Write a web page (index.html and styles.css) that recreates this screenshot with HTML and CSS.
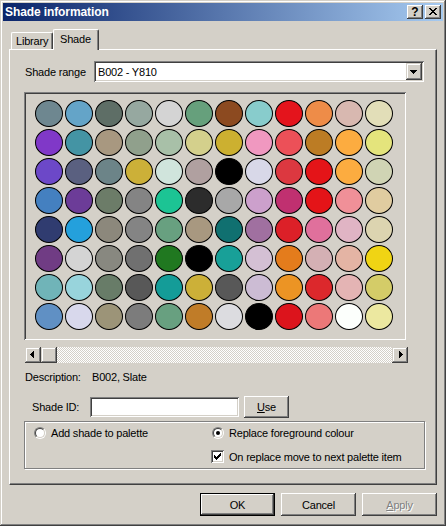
FILE: index.html
```html
<!DOCTYPE html>
<html>
<head>
<meta charset="utf-8">
<link rel="stylesheet" href="styles.css">
</head>
<body>
<div class="window">
  <div class="titlebar">
    <span class="title">Shade information</span>
    <div class="tbtns">
      <span class="tbtn help">?</span>
      <span class="tbtn close"><svg width="16" height="14" viewBox="0 0 16 14" shape-rendering="crispEdges"><path d="M4 3h2v1h-2zM10 3h2v1h-2zM5 4h2v1h-2zM9 4h2v1h-2zM6 5h4v1h-4zM7 6h2v1h-2zM6 7h4v1h-4zM5 8h2v1h-2zM9 8h2v1h-2zM4 9h2v1h-2zM10 9h2v1h-2z" fill="#000"/></svg></span>
    </div>
  </div>
  <div class="content">
    <div class="tabs">
      <div class="tab lib">Library</div>
      <div class="tab active">Shade</div>
    </div>
    <div class="panel">
      <div class="range">
        <span class="lbl-range">Shade range</span>
        <div class="combo">
          <span class="combo-text">B002 - Y810</span>
          <span class="dd"><svg width="16" height="17" viewBox="0 0 16 17" shape-rendering="crispEdges"><path d="M4 7h7v1h-7zM5 8h5v1h-5zM6 9h3v1h-3zM7 10h1v1h-1z" fill="#000"/></svg></span>
        </div>
      </div>
      <div class="swatches">
        <div class="grid">
          <span class="sw" style="background:#6e8790"></span><span class="sw" style="background:#64a4c8"></span><span class="sw" style="background:#5e6e66"></span><span class="sw" style="background:#96a8a0"></span><span class="sw" style="background:#d4d4d4"></span><span class="sw" style="background:#66a07c"></span><span class="sw" style="background:#8c4a20"></span><span class="sw" style="background:#88cccc"></span><span class="sw" style="background:#e4141c"></span><span class="sw" style="background:#ee8c48"></span><span class="sw" style="background:#d8b8b0"></span><span class="sw" style="background:#e2deb8"></span>
          <span class="sw" style="background:#8038c8"></span><span class="sw" style="background:#4494a4"></span><span class="sw" style="background:#a89880"></span><span class="sw" style="background:#90a08c"></span><span class="sw" style="background:#a8c0a8"></span><span class="sw" style="background:#d4d08c"></span><span class="sw" style="background:#ccb030"></span><span class="sw" style="background:#f098c0"></span><span class="sw" style="background:#ec5058"></span><span class="sw" style="background:#bc7c24"></span><span class="sw" style="background:#fcac40"></span><span class="sw" style="background:#e4e47c"></span>
          <span class="sw" style="background:#6c48c8"></span><span class="sw" style="background:#5a6080"></span><span class="sw" style="background:#6c8488"></span><span class="sw" style="background:#ccb038"></span><span class="sw" style="background:#d0e4dc"></span><span class="sw" style="background:#b0a0a0"></span><span class="sw" style="background:#000000"></span><span class="sw" style="background:#d8d8e8"></span><span class="sw" style="background:#dc3840"></span><span class="sw" style="background:#e41418"></span><span class="sw" style="background:#fcac40"></span><span class="sw" style="background:#d0d4b4"></span>
          <span class="sw" style="background:#4480c0"></span><span class="sw" style="background:#6c3c98"></span><span class="sw" style="background:#6c7c68"></span><span class="sw" style="background:#848484"></span><span class="sw" style="background:#1cc494"></span><span class="sw" style="background:#2c2c2c"></span><span class="sw" style="background:#a8a8a8"></span><span class="sw" style="background:#cca0cc"></span><span class="sw" style="background:#c03070"></span><span class="sw" style="background:#e41418"></span><span class="sw" style="background:#f09098"></span><span class="sw" style="background:#e0cca0"></span>
          <span class="sw" style="background:#303c70"></span><span class="sw" style="background:#24a0dc"></span><span class="sw" style="background:#8c887c"></span><span class="sw" style="background:#848484"></span><span class="sw" style="background:#68a080"></span><span class="sw" style="background:#a89880"></span><span class="sw" style="background:#107070"></span><span class="sw" style="background:#a070a0"></span><span class="sw" style="background:#dc2028"></span><span class="sw" style="background:#e0709c"></span><span class="sw" style="background:#e0b4c4"></span><span class="sw" style="background:#dcd4b0"></span>
          <span class="sw" style="background:#703c84"></span><span class="sw" style="background:#d4d4d4"></span><span class="sw" style="background:#888880"></span><span class="sw" style="background:#707070"></span><span class="sw" style="background:#207820"></span><span class="sw" style="background:#000000"></span><span class="sw" style="background:#18a098"></span><span class="sw" style="background:#d4c0d4"></span><span class="sw" style="background:#e47c1c"></span><span class="sw" style="background:#d4b0b4"></span><span class="sw" style="background:#e4b4a4"></span><span class="sw" style="background:#f0d414"></span>
          <span class="sw" style="background:#70b4b8"></span><span class="sw" style="background:#98d4dc"></span><span class="sw" style="background:#687c68"></span><span class="sw" style="background:#585858"></span><span class="sw" style="background:#149c98"></span><span class="sw" style="background:#ccb038"></span><span class="sw" style="background:#585858"></span><span class="sw" style="background:#ccbcd4"></span><span class="sw" style="background:#ec9424"></span><span class="sw" style="background:#dc282c"></span><span class="sw" style="background:#e4b4b4"></span><span class="sw" style="background:#d4cc68"></span>
          <span class="sw" style="background:#6090c4"></span><span class="sw" style="background:#d8d8ec"></span><span class="sw" style="background:#9c9478"></span><span class="sw" style="background:#7c7c7c"></span><span class="sw" style="background:#68a080"></span><span class="sw" style="background:#c07c28"></span><span class="sw" style="background:#dcdce0"></span><span class="sw" style="background:#000000"></span><span class="sw" style="background:#dc141c"></span><span class="sw" style="background:#ec7878"></span><span class="sw" style="background:#fcfffc"></span><span class="sw" style="background:#ece8a0"></span>
        </div>
      </div>
      <div class="hscroll">
        <span class="sbtn"><svg width="16" height="16" viewBox="0 0 16 16" shape-rendering="crispEdges"><path d="M5 7h1v1h-1zM6 6h1v3h-1zM7 5h1v5h-1zM8 4h1v7h-1z" fill="#000"/></svg></span>
        <span class="thumb"></span>
        <span class="track"></span>
        <span class="sbtn"><svg width="16" height="16" viewBox="0 0 16 16" shape-rendering="crispEdges"><path d="M7 4h1v7h-1zM8 5h1v5h-1zM9 6h1v3h-1zM10 7h1v1h-1z" fill="#000"/></svg></span>
      </div>
      <div class="desc">
        <span class="dlabel">Description:</span>
        <span>B002, Slate</span>
      </div>
      <div class="idrow">
        <span class="idlabel">Shade ID:</span>
        <span class="field"></span>
        <span class="btn use"><span><u>U</u>se</span></span>
      </div>
      <div class="group">
        <div class="opt">
          <span class="cell"><span class="radio"><span class="radio-in"></span></span></span>
          <span class="opt-text">Add shade to palette</span>
        </div>
        <div class="opt">
          <span class="cell"><span class="radio"><span class="radio-in"><span class="dot"></span></span></span></span>
          <span class="opt-text">Replace foreground colour</span>
        </div>
        <div class="opt empty"></div>
        <div class="opt">
          <span class="cell check"><svg width="13" height="13" viewBox="0 0 13 13" shape-rendering="crispEdges"><path d="M9 3h1v1h-1zM8 4h2v1h-2zM3 5h1v1h-1zM7 5h3v1h-3zM3 6h2v1h-2zM6 6h3v1h-3zM3 7h5v1h-5zM4 8h3v1h-3zM5 9h1v1h-1z" fill="#000"/></svg></span>
          <span class="opt-text">On replace move to next palette item</span>
        </div>
      </div>
    </div>
    <div class="actions">
      <span class="btn default">OK</span>
      <span class="btn">Cancel</span>
      <span class="btn disabled"><span><u>A</u>pply</span></span>
    </div>
  </div>
</div>
</body>
</html>
```

FILE: styles.css
```css
html, body {
  margin: 0;
  padding: 0;
  background: #d4d0c8;
}
body {
  font: 11px "Liberation Sans", Arial, sans-serif;
  letter-spacing: -0.2px;
  color: #000;
}
.window {
  width: 446px;
  height: 526px;
  box-sizing: border-box;
  padding: 3px;
  background: #d4d0c8;
  box-shadow: inset -1px -1px #404040, inset 1px 1px #d4d0c8, inset -2px -2px #808080, inset 2px 2px #fff;
  display: flex;
  flex-direction: column;
}
.titlebar {
  height: 18px;
  display: flex;
  align-items: center;
  justify-content: space-between;
  background: linear-gradient(to right, #0a246a, #a6caf0);
  padding: 0 2px;
}
.title {
  color: #fff;
  font-weight: bold;
  font-size: 12px;
  letter-spacing: -0.1px;
}
.tbtns {
  display: flex;
  gap: 2px;
}
.tbtn {
  width: 16px;
  height: 14px;
  box-sizing: border-box;
  background: #d4d0c8;
  box-shadow: inset -1px -1px #404040, inset 1px 1px #fff, inset -2px -2px #808080;
  display: flex;
  align-items: center;
  justify-content: center;
  font-weight: bold;
  font-size: 12px;
  line-height: 14px;
  letter-spacing: 0;
}
.tbtn svg { display: block; }
.content {
  flex: 1;
  padding: 8px 6px 0 6px;
  display: flex;
  flex-direction: column;
}
.tabs {
  display: flex;
  align-items: flex-end;
  height: 20px;
  padding-left: 2px;
  position: relative;
  z-index: 1;
}
.tab {
  height: 17px;
  box-sizing: border-box;
  border-top: 1px solid #fff;
  border-left: 1px solid #fff;
  border-right: 1px solid #404040;
  box-shadow: inset -1px 0 #808080;
  border-top-left-radius: 2px;
  border-top-right-radius: 2px;
  display: flex;
  align-items: center;
  background: #d4d0c8;
}
.tab.lib {
  width: 42px;
  padding-left: 4px;
}
.tab.active {
  width: 46px;
  height: 21px;
  margin-bottom: -1px;
  padding-left: 6px;
  padding-bottom: 2px;
}
.panel {
  width: 428px;
  height: 436px;
  box-sizing: border-box;
  border: 1px solid;
  border-color: #fff #404040 #404040 #fff;
  box-shadow: inset -1px -1px #808080;
  padding: 11px 0 0 14px;
}
.range {
  display: flex;
  align-items: center;
  height: 21px;
}
.lbl-range {
  width: 70px;
  padding-left: 1px;
  box-sizing: border-box;
}
.combo {
  width: 330px;
  height: 21px;
  box-sizing: border-box;
  padding: 2px;
  background: #fff;
  box-shadow: inset 1px 1px #808080, inset -1px -1px #fff, inset 2px 2px #404040, inset -2px -2px #d4d0c8;
  display: flex;
  align-items: center;
}
.combo-text {
  padding-left: 2px;
}
.dd {
  margin-left: auto;
  width: 16px;
  height: 17px;
  background: #d4d0c8;
  box-shadow: inset -1px -1px #404040, inset 1px 1px #d4d0c8, inset -2px -2px #808080, inset 2px 2px #fff;
}
.dd svg { display: block; }
.swatches {
  margin-top: 10px;
  width: 382px;
  height: 248px;
  box-sizing: border-box;
  padding: 8px 0 0 11px;
  box-shadow: inset 1px 1px #808080, inset -1px -1px #fff, inset 2px 2px #404040, inset -2px -2px #d4d0c8;
}
.grid {
  display: grid;
  grid-template-columns: repeat(12, 28px);
  grid-auto-rows: 27px;
  gap: 2px;
}
.sw {
  display: block;
  border-radius: 50%;
  border: 1px solid #000;
  box-sizing: border-box;
}
.hscroll {
  margin: 7px 0 0 1px;
  width: 383px;
  height: 16px;
  display: flex;
}
.sbtn, .thumb {
  width: 16px;
  height: 16px;
  flex: none;
  background: #d4d0c8;
  box-shadow: inset -1px -1px #404040, inset 1px 1px #d4d0c8, inset -2px -2px #808080, inset 2px 2px #fff;
}
.sbtn svg { display: block; }
.track {
  flex: 1;
  background: repeating-conic-gradient(#fff 0 25%, #d4d0c8 0 50%) 0 0 / 2px 2px;
}
.desc {
  margin-top: 7px;
  height: 14px;
  line-height: 14px;
  display: flex;
  padding-left: 1px;
}
.dlabel {
  width: 67px;
}
.idrow {
  margin-top: 12px;
  height: 22px;
  display: flex;
  align-items: center;
  padding-left: 8px;
}
.idlabel {
  width: 58px;
}
.field {
  width: 149px;
  height: 20px;
  background: #fff;
  box-shadow: inset 1px 1px #808080, inset -1px -1px #fff, inset 2px 2px #404040, inset -2px -2px #d4d0c8;
}
.btn {
  width: 75px;
  height: 23px;
  box-sizing: border-box;
  background: #d4d0c8;
  box-shadow: inset -1px -1px #404040, inset 1px 1px #fff, inset -2px -2px #808080, inset 2px 2px #d4d0c8;
  display: flex;
  align-items: center;
  justify-content: center;
}
.btn.use {
  width: 45px;
  height: 22px;
  margin-left: 5px;
}
.group {
  margin-top: 3px;
  width: 401px;
  height: 48px;
  box-sizing: border-box;
  border: 1px solid #808080;
  box-shadow: inset 1px 1px #fff, 1px 1px #fff;
  padding: 4px 0 0 8px;
  display: grid;
  grid-template-columns: 178px auto;
  grid-auto-rows: 13px;
  row-gap: 11px;
}
.opt {
  display: flex;
  align-items: center;
  height: 13px;
}
.cell {
  width: 13px;
  height: 13px;
  flex: none;
  box-sizing: border-box;
}
.opt-text {
  margin-left: 5px;
  white-space: nowrap;
}
.radio {
  display: block;
  width: 12px;
  height: 12px;
  margin: 1px 0 0 1px;
  box-sizing: border-box;
  border-radius: 50%;
  border: 1px solid;
  border-color: #808080 #fff #fff #808080;
}
.radio-in {
  display: flex;
  align-items: center;
  justify-content: center;
  width: 10px;
  height: 10px;
  box-sizing: border-box;
  border-radius: 50%;
  border: 1px solid;
  border-color: #404040 #d4d0c8 #d4d0c8 #404040;
  background: #fff;
}
.dot {
  width: 4px;
  height: 4px;
  border-radius: 50%;
  background: #000;
}
.check {
  background: #fff;
  box-shadow: inset 1px 1px #808080, inset -1px -1px #fff, inset 2px 2px #404040, inset -2px -2px #d4d0c8;
}
.check svg { display: block; }
.actions {
  display: flex;
  justify-content: flex-end;
  gap: 6px;
  margin-top: 8px;
}
.btn.default {
  border: 1px solid #000;
  box-shadow: inset -1px -1px #404040, inset 1px 1px #fff, inset -2px -2px #808080;
}
.btn.disabled {
  color: #808080;
  text-shadow: 1px 1px 0 #fff;
}
```
